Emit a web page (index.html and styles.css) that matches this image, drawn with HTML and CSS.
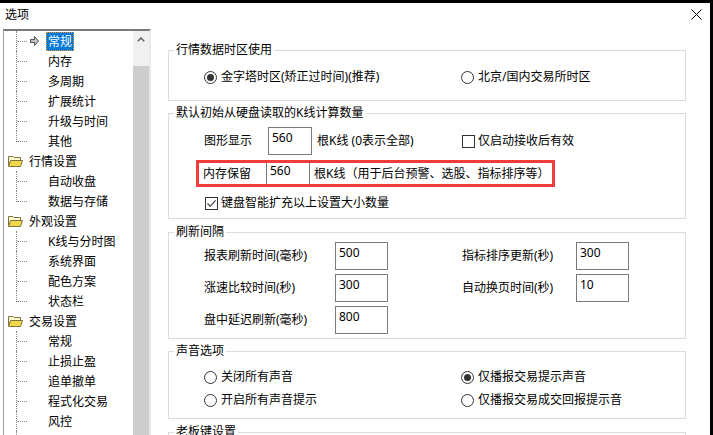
FILE: index.html
```html
<!DOCTYPE html>
<html lang="zh-CN">
<head>
<meta charset="utf-8">
<title>选项</title>
<link rel="stylesheet" href="styles.css">
</head>
<body>
<div class="window">
  <div class="titlebar">
    <span class="title">选项</span>
    <svg class="close" width="11" height="11" viewBox="0 0 11 11"><path d="M0.5 0.5 L10.5 10.5 M10.5 0.5 L0.5 10.5" stroke="#000" stroke-width="1" fill="none"/></svg>
  </div>
  <div class="main">
    <div class="tree">
      <div class="tree-items">
        <div class="row child sel"><span class="guide"></span><span class="slot"><svg width="9" height="10" viewBox="0 0 9 10"><path d="M0.5 3.5 H4.5 V0.5 L8.5 5 L4.5 9.5 V6.5 H0.5 Z" fill="#c4c4c4" stroke="#505050" stroke-width="1"/></svg></span><span class="label">常规</span></div>
        <div class="row child"><span class="guide"></span><span class="slot"></span><span class="label">内存</span></div>
        <div class="row child"><span class="guide"></span><span class="slot"></span><span class="label">多周期</span></div>
        <div class="row child"><span class="guide"></span><span class="slot"></span><span class="label">扩展统计</span></div>
        <div class="row child"><span class="guide"></span><span class="slot"></span><span class="label">升级与时间</span></div>
        <div class="row child last"><span class="guide"></span><span class="slot"></span><span class="label">其他</span></div>
        <div class="row parent"><svg class="folder" width="15" height="12" viewBox="0 0 15 12"><path d="M0.5 1.5 H5 L6 2.5 H12.5 V10.5 H0.5 Z" fill="#fffbd0" stroke="#7d7240"/><path d="M0.5 11.5 L2.5 5.5 H14.5 L12.5 11.5 Z" fill="#f0d848" stroke="#7d7240"/></svg><span class="label">行情设置</span></div>
        <div class="row child"><span class="guide"></span><span class="slot"></span><span class="label">自动收盘</span></div>
        <div class="row child last"><span class="guide"></span><span class="slot"></span><span class="label">数据与存储</span></div>
        <div class="row parent"><svg class="folder" width="15" height="12" viewBox="0 0 15 12"><path d="M0.5 1.5 H5 L6 2.5 H12.5 V10.5 H0.5 Z" fill="#fffbd0" stroke="#7d7240"/><path d="M0.5 11.5 L2.5 5.5 H14.5 L12.5 11.5 Z" fill="#f0d848" stroke="#7d7240"/></svg><span class="label">外观设置</span></div>
        <div class="row child"><span class="guide"></span><span class="slot"></span><span class="label">K线与分时图</span></div>
        <div class="row child"><span class="guide"></span><span class="slot"></span><span class="label">系统界面</span></div>
        <div class="row child"><span class="guide"></span><span class="slot"></span><span class="label">配色方案</span></div>
        <div class="row child last"><span class="guide"></span><span class="slot"></span><span class="label">状态栏</span></div>
        <div class="row parent"><svg class="folder" width="15" height="12" viewBox="0 0 15 12"><path d="M0.5 1.5 H5 L6 2.5 H12.5 V10.5 H0.5 Z" fill="#fffbd0" stroke="#7d7240"/><path d="M0.5 11.5 L2.5 5.5 H14.5 L12.5 11.5 Z" fill="#f0d848" stroke="#7d7240"/></svg><span class="label">交易设置</span></div>
        <div class="row child"><span class="guide"></span><span class="slot"></span><span class="label">常规</span></div>
        <div class="row child"><span class="guide"></span><span class="slot"></span><span class="label">止损止盈</span></div>
        <div class="row child"><span class="guide"></span><span class="slot"></span><span class="label">追单撤单</span></div>
        <div class="row child"><span class="guide"></span><span class="slot"></span><span class="label">程式化交易</span></div>
        <div class="row child"><span class="guide"></span><span class="slot"></span><span class="label">风控</span></div>
        <div class="row child"><span class="guide"></span><span class="slot"></span><span class="label"></span></div>
      </div>
      <div class="scrollbar">
        <div class="sb-up"><svg width="8" height="5" viewBox="0 0 8 5"><path d="M0.8 4.2 L4 1 L7.2 4.2" stroke="#606060" stroke-width="1.5" fill="none"/></svg></div>
        <div class="sb-gap"></div>
        <div class="sb-thumb"></div>
      </div>
    </div>

    <div class="panel">
      <div class="group g1">
        <span class="legend">行情数据时区使用</span>
        <div class="cols">
          <div class="opt"><span class="radio on"></span>金字塔时区(矫正过时间)(推荐)</div>
          <div class="opt"><span class="radio"></span>北京/国内交易所时区</div>
        </div>
      </div>

      <div class="group g2">
        <span class="legend">默认初始从硬盘读取的K线计算数量</span>
        <div class="g2-body">
          <div class="row-a">
            <div class="field">
              <span class="lbl w64">图形显示</span>
              <span class="input w44">560</span>
              <span class="after">根K线 (0表示全部)</span>
            </div>
            <div class="opt chk-right"><span class="checkbox"></span>仅启动接收后有效</div>
          </div>
          <div class="mark">
            <span class="lbl w63">内存保留</span>
            <span class="input in-mark w44">560</span>
            <span class="after4">根K线（用于后台预警、选股、指标排序等）</span>
          </div>
          <div class="opt chk-row"><span class="checkbox"><svg width="11" height="11" viewBox="0 0 11 11"><path d="M1.5 5.5 L4.2 8.3 L9.6 2.4" stroke="#333" stroke-width="1.1" fill="none"/></svg></span>键盘智能扩充以上设置大小数量</div>
        </div>
      </div>

      <div class="group g3">
        <span class="legend">刷新间隔</span>
        <div class="grid3">
          <span class="lbl">报表刷新时间(毫秒)</span>
          <span class="num">500</span>
          <span class="lbl c4">指标排序更新(秒)</span>
          <span class="num c5">300</span>
          <span class="lbl">涨速比较时间(秒)</span>
          <span class="num">300</span>
          <span class="lbl c4">自动换页时间(秒)</span>
          <span class="num c5">10</span>
          <span class="lbl">盘中延迟刷新(毫秒)</span>
          <span class="num">800</span>
        </div>
      </div>

      <div class="group g4">
        <span class="legend">声音选项</span>
        <div class="cols cols4">
          <div class="opt"><span class="radio"></span>关闭所有声音</div>
          <div class="opt"><span class="radio on"></span>仅播报交易提示声音</div>
          <div class="opt"><span class="radio"></span>开启所有声音提示</div>
          <div class="opt"><span class="radio"></span>仅播报交易成交回报提示音</div>
        </div>
      </div>

      <div class="group g5">
        <span class="legend">老板键设置</span>
      </div>
    </div>
  </div>
</div>
</body>
</html>
```

FILE: styles.css
```css
* { box-sizing: border-box; }
html, body { margin: 0; padding: 0; }
body {
  font-family: "Noto Sans", "Noto Sans CJK SC", sans-serif;
  font-size: 12px;
  color: #000;
  background: #fff;
}

.window {
  width: 713px;
  height: 435px;
  border-top: 3px solid #000;
  border-right: 3px solid #000;
  background: #fff;
  overflow: hidden;
  display: flex;
  flex-direction: column;
}

.titlebar {
  height: 26px;
  flex: none;
  display: flex;
  align-items: center;
  justify-content: space-between;
  padding: 0 8px 3px 5px;
  line-height: 16px;
}
.close { display: block; }

.main {
  flex: 1;
  display: flex;
  min-height: 0;
}

/* ---------- tree ---------- */
.tree {
  margin-left: 3px;
  width: 148px;
  flex: none;
  display: flex;
  border-top: 2px solid #7a7a7a;
  border-left: 1px solid #a0a0a0;
  border-right: 2px solid #e8e8e8;
}
.tree-items {
  width: 129px;
  flex: none;
  overflow: hidden;
}
.row {
  height: 20px;
  display: flex;
  align-items: center;
  line-height: 19px;
  white-space: nowrap;
}
.child { padding-left: 12px; }
.parent { padding-left: 4px; }
.guide {
  width: 12px;
  align-self: stretch;
  flex: none;
  border-left: 1px dotted #8a8a8a;
  position: relative;
}
.guide::after {
  content: "";
  position: absolute;
  left: 0;
  right: 1px;
  top: 10px;
  border-top: 1px dotted #8a8a8a;
}
.last .guide {
  align-self: flex-start;
  height: 11px;
}
.slot {
  width: 18px;
  flex: none;
  display: flex;
  align-items: center;
  padding-left: 2px;
}
.slot svg { display: block; }
.label {
  padding: 0 2px;
  height: 19px;
}
.sel .label {
  background: #0078d7;
  color: #fff;
  outline: 1px dotted #f09a2c;
  outline-offset: -1px;
}
.folder {
  display: block;
  flex: none;
  margin-right: 5px;
}
.parent .label { padding-left: 1px; }

.scrollbar {
  width: 16px;
  flex: none;
  background: #f0f0f0;
  display: flex;
  flex-direction: column;
}
.sb-up {
  height: 17px;
  display: flex;
  align-items: center;
  justify-content: center;
}
.sb-up svg { display: block; }
.sb-gap { height: 18px; }
.sb-thumb {
  flex: 1;
  background: #cdcdcd;
}

/* ---------- panel ---------- */
.panel {
  flex: 1;
  padding: 21px 24px 0 17px;
}
.group {
  position: relative;
  border: 1px solid #dcdcdc;
}
.legend {
  position: absolute;
  top: -9px;
  left: 5px;
  padding: 0 2px;
  background: #fff;
  line-height: 16px;
  white-space: nowrap;
}
.g1 { height: 51px; }
.g2 { height: 106px; margin-top: 12px; }
.g3 { height: 107px; margin-top: 13px; }
.g4 { height: 68px; margin-top: 12px; }
.g5 { height: 40px; margin-top: 13px; }

.cols {
  display: grid;
  grid-template-columns: 257px auto;
  padding: 18px 0 0 35px;
}
.cols4 {
  padding-top: 17px;
  row-gap: 7px;
}
.opt {
  display: flex;
  align-items: center;
  height: 16px;
  line-height: 16px;
  white-space: nowrap;
}
.radio {
  width: 13px;
  height: 13px;
  flex: none;
  border: 1px solid #333;
  border-radius: 50%;
  background: #fff;
  display: flex;
  align-items: center;
  justify-content: center;
  margin-right: 4px;
}
.radio.on::after {
  content: "";
  width: 7px;
  height: 7px;
  border-radius: 50%;
  background: #333;
}
.checkbox {
  width: 13px;
  height: 13px;
  flex: none;
  border: 1px solid #333;
  background: #fff;
  margin-right: 3px;
  display: flex;
  align-items: center;
  justify-content: center;
}
.checkbox svg { display: block; }

.g2-body { padding-left: 35px; }
.row-a {
  display: grid;
  grid-template-columns: 257px auto;
  align-items: center;
  height: 28px;
  margin-top: 13px;
}
.field {
  display: flex;
  align-items: center;
  height: 28px;
  white-space: nowrap;
}
.lbl { line-height: 16px; white-space: nowrap; }
.w64 { width: 64px; flex: none; }
.w63 { width: 63px; flex: none; }
.w44 { width: 44px; flex: none; }
.input {
  height: 28px;
  border: 1px solid #7a7a7a;
  padding: 2px 3px 0;
  line-height: 16px;
  background: #fff;
}
.after { margin-left: 5px; line-height: 16px; }
.after4 { margin-left: 4px; line-height: 16px; white-space: nowrap; }
.chk-right { margin-left: 1px; }

.mark {
  margin: 5px 0 0 -8px;
  width: 359px;
  height: 27px;
  border: 3px solid #f23c3c;
  padding-left: 4px;
  display: flex;
  align-items: center;
}
.in-mark {
  align-self: stretch;
  height: auto;
  border-top: none;
  border-bottom: none;
  padding-top: 0;
}
.chk-row {
  margin-top: 8px;
  margin-left: 1px;
}

.grid3 {
  display: grid;
  grid-template-columns: 131px 53px 74px 114px 53px;
  grid-auto-rows: 28px;
  row-gap: 4px;
  align-items: center;
  padding: 9px 0 0 35px;
}
.c4 { grid-column: 4; }
.c5 { grid-column: 5; }
.num {
  height: 28px;
  border: 1px solid #7a7a7a;
  padding: 2px 3px 0;
  line-height: 16px;
}
```
